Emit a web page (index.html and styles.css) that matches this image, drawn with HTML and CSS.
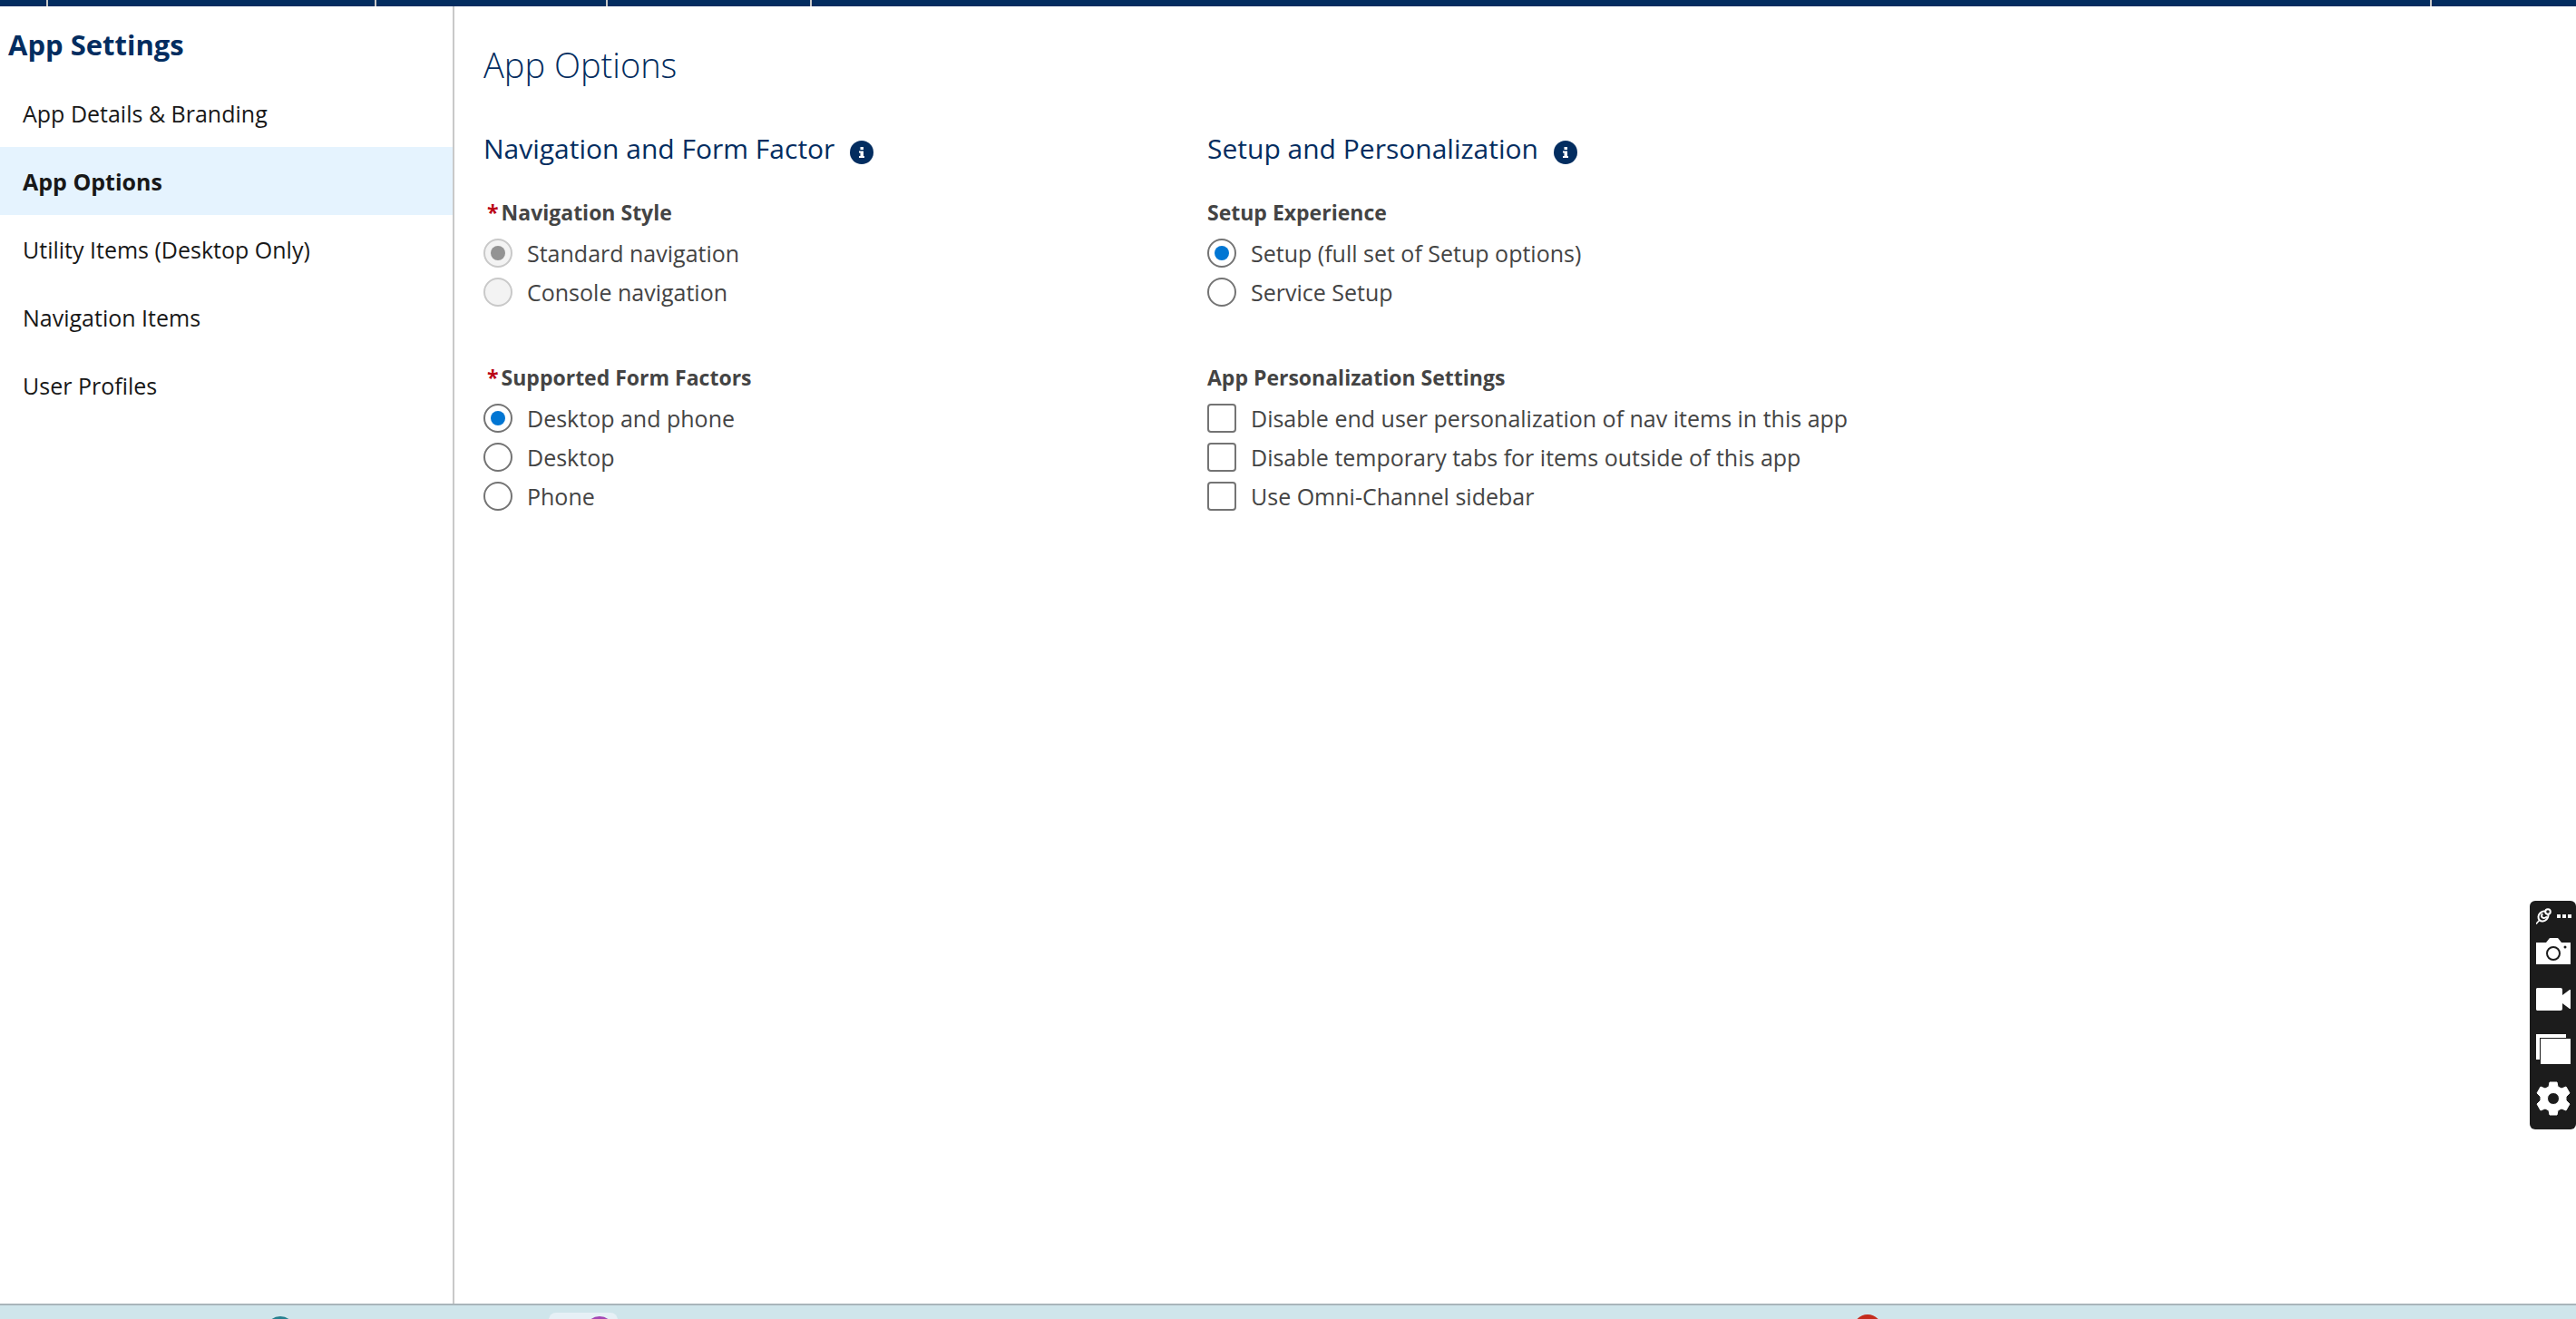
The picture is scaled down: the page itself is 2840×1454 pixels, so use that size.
FILE: index.html
```html
<!DOCTYPE html>
<html lang="en">
<head>
<meta charset="utf-8">
<title>App Options</title>
<meta name="viewport" content="width=device-width, initial-scale=1">
<link rel="stylesheet" href="styles.css">
</head>
<body>
<header class="tabbar">
  <span class="tab tab-launcher"></span>
  <span class="tab tab-name"></span>
  <span class="tab tab-home"></span>
  <span class="tab tab-object"></span>
  <span class="tab tab-rest"></span>
</header>
<div class="layout">
  <aside class="sidebar">
    <h2 class="sidebar-title">App Settings</h2>
    <nav class="menu">
      <a class="menu-item" href="#details">App Details &amp; Branding</a>
      <a class="menu-item is-active" href="#options" aria-current="page">App Options</a>
      <a class="menu-item" href="#utility">Utility Items (Desktop Only)</a>
      <a class="menu-item" href="#navigation">Navigation Items</a>
      <a class="menu-item" href="#profiles">User Profiles</a>
    </nav>
  </aside>
  <main class="content">
    <h1 class="page-title">App Options</h1>
    <form class="columns">
      <section class="column">
        <h2 class="section-title">Navigation and Form Factor
          <button class="info" type="button" aria-label="Help"><svg viewBox="0 0 26 26"><circle cx="13" cy="13" r="13"/><path fill="#fff" d="M11.500 7h3.500v3h-3.500zM10 11.500h5v5.500h1v2h-6v-2h1.500v-3.500H10z"/></svg></button>
        </h2>
        <fieldset class="group">
          <legend class="legend required"><span class="star">*</span>Navigation Style</legend>
          <label class="option"><input class="radio" type="radio" name="navstyle" checked disabled>Standard navigation</label>
          <label class="option"><input class="radio" type="radio" name="navstyle" disabled>Console navigation</label>
        </fieldset>
        <fieldset class="group">
          <legend class="legend required"><span class="star">*</span>Supported Form Factors</legend>
          <label class="option"><input class="radio" type="radio" name="factor" checked>Desktop and phone</label>
          <label class="option"><input class="radio" type="radio" name="factor">Desktop</label>
          <label class="option"><input class="radio" type="radio" name="factor">Phone</label>
        </fieldset>
      </section>
      <section class="column">
        <h2 class="section-title">Setup and Personalization
          <button class="info" type="button" aria-label="Help"><svg viewBox="0 0 26 26"><circle cx="13" cy="13" r="13"/><path fill="#fff" d="M11.500 7h3.500v3h-3.500zM10 11.500h5v5.500h1v2h-6v-2h1.500v-3.500H10z"/></svg></button>
        </h2>
        <fieldset class="group">
          <legend class="legend">Setup Experience</legend>
          <label class="option"><input class="radio" type="radio" name="setup" checked>Setup (full set of Setup options)</label>
          <label class="option"><input class="radio" type="radio" name="setup">Service Setup</label>
        </fieldset>
        <fieldset class="group">
          <legend class="legend">App Personalization Settings</legend>
          <label class="option"><input class="check" type="checkbox">Disable end user personalization of nav items in this app</label>
          <label class="option"><input class="check" type="checkbox">Disable temporary tabs for items outside of this app</label>
          <label class="option"><input class="check" type="checkbox">Use Omni-Channel sidebar</label>
        </fieldset>
      </section>
    </form>
  </main>
</div>
<footer class="taskbar">
  <span class="task task-teal"></span>
  <span class="task-card"><span class="task task-purple"></span></span>
  <span class="task task-red"></span>
</footer>
<div class="capture" role="toolbar" aria-label="Capture">
  <div class="capture-top">
    <button class="tool" type="button" aria-label="Pin"><svg width="17" height="18" viewBox="0 0 17 18" fill="none" stroke="#fff"><path d="M0 17.500 4 13" stroke-width="1.500"/><ellipse cx="8" cy="9" rx="6" ry="5" transform="rotate(-45 8 9)" stroke-width="2"/><path d="M7 6q-2 3 0 4.500t5-1" stroke-width="2"/><circle cx="13" cy="4" r="2.800" fill="#1c1c1c" stroke-width="2"/></svg></button>
    <button class="tool" type="button" aria-label="More"><svg width="16" height="4" viewBox="0 0 16 4" fill="#fff"><path d="M0 0h4v4H0zM6 0h4v4H6zM12 0h4v4h-4z"/></svg></button>
  </div>
  <button class="tool" type="button" aria-label="Take picture"><svg width="38" height="29" viewBox="0 0 38 29"><path fill="#fff" d="M0 5h11l4-5h9l4 5h10v24H0z"/><circle cx="19" cy="17" r="7" fill="none" stroke="#1c1c1c" stroke-width="2"/><circle cx="32" cy="10" r="1.500" fill="#1c1c1c"/></svg></button>
  <button class="tool" type="button" aria-label="Record video"><svg width="38" height="25" viewBox="0 0 38 25"><path fill="#fff" d="M1 0h26q2 0 2 2v6l8-6h1v21h-1l-8-6v6q0 2-2 2H1l-1-1V1z"/></svg></button>
  <button class="tool" type="button" aria-label="Gallery"><svg width="38" height="33" viewBox="0 0 38 33" fill="#fff"><path d="M0 0h33v4H4v24H0z"/><path d="M5 5h33v28H5z"/></svg></button>
  <button class="tool" type="button" aria-label="Settings"><svg width="38" height="38" viewBox="0 0 38 38"><path fill="#fff" fill-rule="evenodd" stroke="#fff" stroke-linejoin="round" d="M15 1h8l1 5 4 2 5-2 4 7-4 4v4l4 4-4 7-5-2-4 2-1 5h-8l-1-5-4-2-5 2-4-7 4-4v-4l-4-4 4-7 5 2 4-2zM19 12.500a6.500 6.500 0 1 0 0 13a6.500 6.500 0 1 0 0-13z"/></svg></button>
</div>
</body>
</html>
```
FILE: styles.css
```css
* { box-sizing: border-box; }

body {
  margin: 0;
  min-height: 100vh;
  display: flex;
  flex-direction: column;
  background: #fff;
  color: #444;
  font-family: "Open Sans", "Noto Sans", sans-serif;
  font-size: 25px;
  line-height: 36px;
}

h1, h2, fieldset, legend { margin: 0; padding: 0; border: 0; }

button { padding: 0; border: 0; background: none; cursor: pointer; }
svg { display: block; }

.tabbar { display: flex; height: 7px; background: #032d60; }
.tab { border-right: 2px solid #c9c9c9; }
.tab-launcher { width: 53px; }
.tab-name { width: 362px; }
.tab-home { width: 255px; }
.tab-object { width: 225px; }
.tab-rest { flex: 1; margin-right: 159px; }

.layout { display: flex; flex: 1; }

.sidebar { width: 501px; border-right: 2px solid #c9c9c9; }
.sidebar-title {
  padding: 20px 9px 16px;
  color: #032d60;
  font-size: 31px;
  line-height: 44px;
  font-weight: 700;
}
.menu-item {
  display: block;
  padding: 20px 25px 19px;
  color: #181818;
  text-decoration: none;
}
.menu-item.is-active { background: #e5f3fe; font-weight: 700; }

.content { flex: 1; padding: 38px 27px 0 32px; }
.page-title {
  margin-bottom: 45px;
  color: #032d60;
  font-size: 38px;
  line-height: 52px;
  font-weight: 300;
}

.columns { display: grid; grid-template-columns: 35% 1fr; }
.section-title {
  display: flex;
  align-items: center;
  gap: 17px;
  margin-bottom: 26px;
  color: #032d60;
  font-size: 30px;
  line-height: 44px;
  font-weight: 400;
}
.info { width: 26px; height: 26px; margin-top: 8px; }
.info svg { fill: #032d60; }

.group { margin-bottom: 56px; }
.legend { margin-bottom: 7px; font-size: 23px; line-height: 44px; font-weight: 700; }
.required { padding-left: 4px; }
.star { margin-right: 3px; color: #ba0517; }
.option { display: flex; align-items: center; gap: 16px; height: 32px; margin-bottom: 11px; }
.option:last-child { margin-bottom: 0; }

.radio, .check {
  appearance: none;
  flex: none;
  width: 32px;
  height: 32px;
  margin: 0;
  border: 2px solid #747474;
  background: #fff;
}
.check { border-radius: 4px; }
.radio { display: grid; place-items: center; border-radius: 50%; }
.radio:checked::before {
  content: "";
  width: 16px;
  height: 16px;
  border-radius: 50%;
  background: #0176d3;
}
.radio:disabled { border-color: #c9c9c9; background: #f3f3f3; }
.radio:disabled:checked::before { background: #939393; }

.taskbar {
  display: flex;
  align-items: flex-start;
  height: 17px;
  overflow: hidden;
  border-top: 2px solid #a9b5ba;
  background: #cfe5eb;
}
.task { flex: none; width: 32px; height: 32px; border-radius: 50%; }
.task-teal { margin: 12px 0 0 293px; background: #26808f; }
.task-card {
  flex: none;
  width: 76px;
  height: 76px;
  margin: 8px 0 0 280px;
  padding: 4px 0 0 40px;
  border-radius: 8px;
  background: #e6f0f6;
}
.task-purple { display: block; background: #a347b5; }
.task-red { margin: 10px 765px 0 auto; background: #c42b1c; }

.capture {
  position: fixed;
  right: 0;
  bottom: 209px;
  display: flex;
  flex-direction: column;
  align-items: flex-start;
  width: 51px;
  padding: 8px 0 15px 7px;
  border-radius: 6px;
  background: #1c1c1c;
}
.capture-top { display: flex; align-items: center; gap: 6px; margin-bottom: 15px; }
.capture > .tool { margin-bottom: 26px; }
.capture > .tool:nth-last-child(2) { margin-bottom: 19px; }
.capture > .tool:last-child { margin-bottom: 0; }
```
